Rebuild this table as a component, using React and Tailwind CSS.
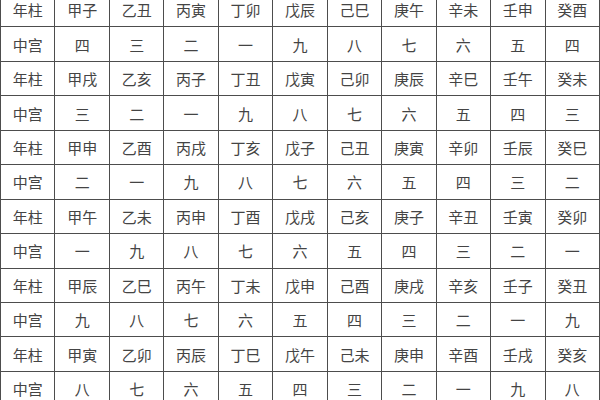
import React from "react";

const rows = [
  ["年柱", "甲子", "乙丑", "丙寅", "丁卯", "戊辰", "己巳", "庚午", "辛未", "壬申", "癸酉"],
  ["中宫", "四", "三", "二", "一", "九", "八", "七", "六", "五", "四"],
  ["年柱", "甲戌", "乙亥", "丙子", "丁丑", "戊寅", "己卯", "庚辰", "辛巳", "壬午", "癸未"],
  ["中宫", "三", "二", "一", "九", "八", "七", "六", "五", "四", "三"],
  ["年柱", "甲申", "乙酉", "丙戌", "丁亥", "戊子", "己丑", "庚寅", "辛卯", "壬辰", "癸巳"],
  ["中宫", "二", "一", "九", "八", "七", "六", "五", "四", "三", "二"],
  ["年柱", "甲午", "乙未", "丙申", "丁酉", "戊戌", "己亥", "庚子", "辛丑", "壬寅", "癸卯"],
  ["中宫", "一", "九", "八", "七", "六", "五", "四", "三", "二", "一"],
  ["年柱", "甲辰", "乙巳", "丙午", "丁未", "戊申", "己酉", "庚戌", "辛亥", "壬子", "癸丑"],
  ["中宫", "九", "八", "七", "六", "五", "四", "三", "二", "一", "九"],
  ["年柱", "甲寅", "乙卯", "丙辰", "丁巳", "戊午", "己未", "庚申", "辛酉", "壬戌", "癸亥"],
  ["中宫", "八", "七", "六", "五", "四", "三", "二", "一", "九", "八"],
];

const App = () => {
  return (
    <div className="w-[600px] h-[400px] overflow-hidden bg-white">
      {/* table is shifted up so the first row is cut, as in the photo */}
      <div
        className="mt-[-7px] w-[600px] grid grid-cols-[repeat(11,minmax(0,1fr))] auto-rows-[34.45px] border-l border-[#4d4d4d] text-[15px] text-[#444]"
        style={{ fontFamily: '"Noto Sans CJK SC", sans-serif' }}
      >
        {rows.map((row, i) =>
          row.map((cell, j) => (
            <div
              key={i + "-" + j}
              className="flex items-center justify-center border-r border-b border-[#4d4d4d] font-normal leading-none"
            >
              {cell}
            </div>
          ))
        )}
      </div>
    </div>
  );
};

export default App;
